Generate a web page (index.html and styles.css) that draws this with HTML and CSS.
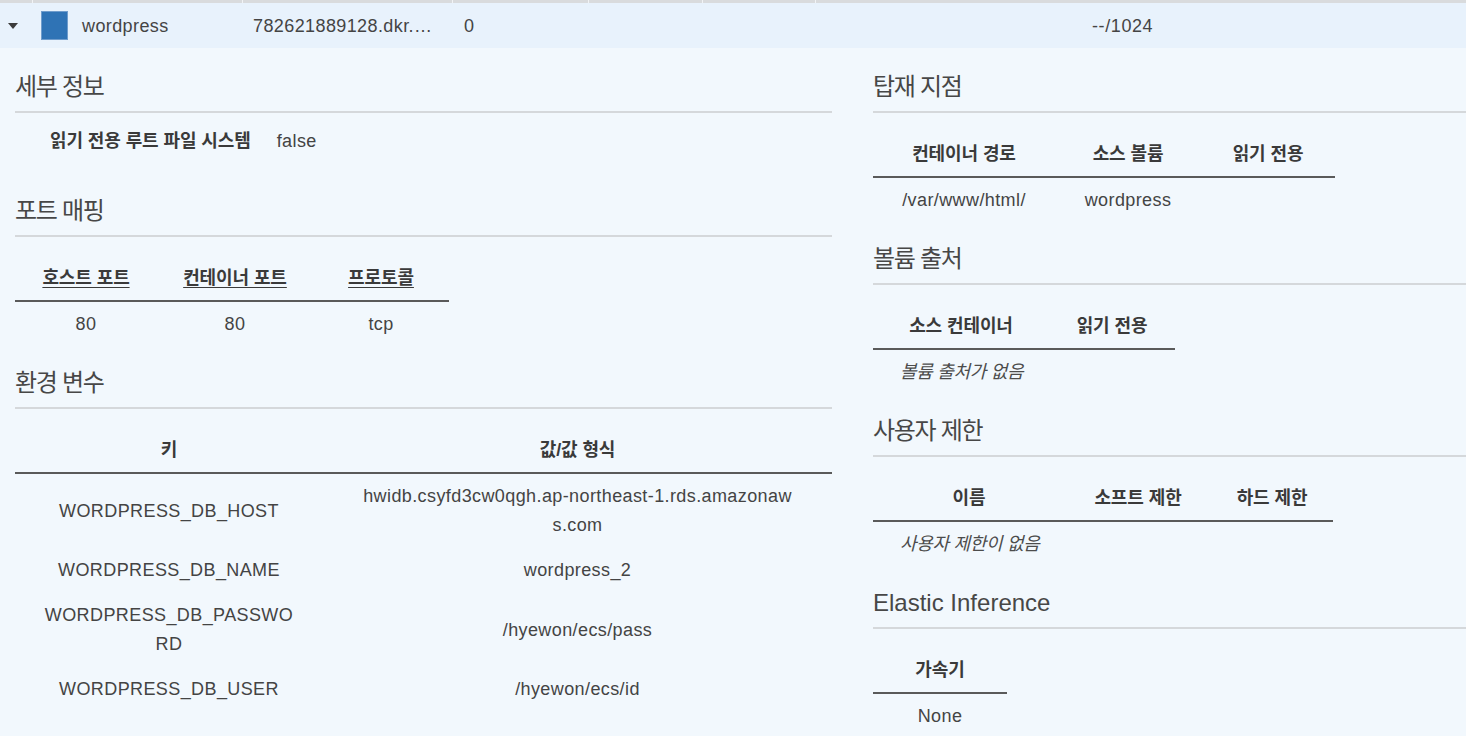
FILE: index.html
```html
<!DOCTYPE html>
<html lang="ko">
<head>
<meta charset="utf-8">
<title>Container details</title>
<link rel="stylesheet" href="styles.css">
</head>
<body>
<div class="strip">
  <span class="tick t1"></span><span class="tick t2"></span><span class="tick t3"></span><span class="tick t4"></span><span class="tick t5"></span><span class="tick t6"></span><span class="tick t7"></span>
</div>
<div class="toprow">
  <div class="c c1"><span class="caret"></span></div>
  <div class="c c2"><span class="swatch"></span><span class="name">wordpress</span></div>
  <div class="c c3"><span class="ellip">782621889128.dkr.ecr.ap-northeast-1.amazonaws.com</span></div>
  <div class="c c4">0</div>
  <div class="c c5"></div>
  <div class="c c6"></div>
  <div class="c c7"></div>
  <div class="c c8">--/1024</div>
</div>

<div class="content">
  <div class="col">
    <section class="section">
      <h3 class="sec-title ko">세부 정보</h3>
      <div class="detail">
        <span class="dlabel ko">읽기 전용 루트 파일 시스템</span>
        <span class="dval">false</span>
      </div>
    </section>

    <section class="section">
      <h3 class="sec-title ko">포트 매핑</h3>
      <table class="tbl">
        <colgroup><col class="w142"><col class="w156"><col class="w136"></colgroup>
        <thead><tr><th class="ko ul">호스트 포트</th><th class="ko ul">컨테이너 포트</th><th class="ko ul">프로토콜</th></tr></thead>
        <tbody><tr><td>80</td><td>80</td><td>tcp</td></tr></tbody>
      </table>
    </section>

    <section class="section">
      <h3 class="sec-title ko">환경 변수</h3>
      <table class="tbl env">
        <colgroup><col class="w308"><col class="w509"></colgroup>
        <thead><tr><th class="ko">키</th><th class="ko">값/값 형식</th></tr></thead>
        <tbody>
          <tr><td class="key">WORDPRESS_DB_HOST</td><td class="val">hwidb.csyfd3cw0qgh.ap-northeast-1.rds.amazonaws.com</td></tr>
          <tr><td class="key">WORDPRESS_DB_NAME</td><td class="val">wordpress_2</td></tr>
          <tr><td class="key">WORDPRESS_DB_PASSWORD</td><td class="val">/hyewon/ecs/pass</td></tr>
          <tr><td class="key">WORDPRESS_DB_USER</td><td class="val">/hyewon/ecs/id</td></tr>
        </tbody>
      </table>
    </section>
  </div>

  <div class="col">
    <section class="section">
      <h3 class="sec-title ko">탑재 지점</h3>
      <table class="tbl">
        <colgroup><col class="w182"><col class="w146"><col class="w134"></colgroup>
        <thead><tr><th class="ko">컨테이너 경로</th><th class="ko">소스 볼륨</th><th class="ko">읽기 전용</th></tr></thead>
        <tbody><tr><td>/var/www/html/</td><td>wordpress</td><td></td></tr></tbody>
      </table>
    </section>

    <section class="section">
      <h3 class="sec-title ko">볼륨 출처</h3>
      <table class="tbl">
        <colgroup><col class="w176"><col class="w126"></colgroup>
        <thead><tr><th class="ko">소스 컨테이너</th><th class="ko">읽기 전용</th></tr></thead>
        <tbody><tr><td class="empty ko" colspan="2">볼륨 출처가 없음</td></tr></tbody>
      </table>
    </section>

    <section class="section">
      <h3 class="sec-title ko">사용자 제한</h3>
      <table class="tbl">
        <colgroup><col class="w192"><col class="w146"><col class="w122"></colgroup>
        <thead><tr><th class="ko">이름</th><th class="ko">소프트 제한</th><th class="ko">하드 제한</th></tr></thead>
        <tbody><tr><td class="empty ko" colspan="3">사용자 제한이 없음</td></tr></tbody>
      </table>
    </section>

    <section class="section">
      <h3 class="sec-title">Elastic Inference</h3>
      <table class="tbl">
        <colgroup><col class="w134"></colgroup>
        <thead><tr><th class="ko">가속기</th></tr></thead>
        <tbody><tr><td>None</td></tr></tbody>
      </table>
    </section>
  </div>
</div>
</body>
</html>
```

FILE: styles.css
```css
* { box-sizing: border-box; }

html, body {
  margin: 0;
  padding: 0;
  background: #f2f8fd;
}

body {
  font-family: "Liberation Sans", Arial, "Noto Sans CJK KR", sans-serif;
  font-size: 18px;
  color: #444;
  letter-spacing: 0.4px;
  width: 1466px;
  overflow: hidden;
}

/* top strip (bottom of table header above) */
.strip {
  height: 3px;
  background: #d9dbdd;
  display: flex;
}
.tick {
  display: block;
  height: 3px;
  border-right: 1px solid #f1f3f5;
}
.t1 { width: 33px; }
.t2 { width: 210px; }
.t3 { width: 210px; }
.t4 { width: 136px; }
.t5 { width: 114px; }
.t6 { width: 113px; }
.t7 { width: 0; border-right: none; }

/* expanded row */
.toprow {
  display: grid;
  grid-template-columns: 32px 210px 210px 136px 114px 113px 265px 1fr;
  height: 45px;
  background: #e8f2fc;
  align-items: center;
}
.c {
  padding-left: 11px;
  white-space: nowrap;
  display: flex;
  align-items: center;
  line-height: 22px;
  min-width: 0;
  overflow: hidden;
}
.c1 { padding-left: 8px; }
.c2 { padding-left: 9px; }
.c4 { padding-left: 12px; }
.c8 { padding-left: 12px; letter-spacing: 0.6px; }

.caret {
  display: block;
  width: 0;
  height: 0;
  border-left: 5px solid transparent;
  border-right: 5px solid transparent;
  border-top: 6px solid #3b3b3b;
  margin-top: 1px;
}
.swatch {
  display: block;
  flex: none;
  width: 27px;
  height: 29px;
  background: #2f73b5;
  border: 1px solid #6f9ccc;
  margin-right: 14px;
}
.ellip {
  display: block;
  width: 183px;
  overflow: hidden;
  text-overflow: ellipsis;
  white-space: nowrap;
}

/* main two-column layout */
.content {
  display: grid;
  grid-template-columns: 817px 1fr;
  column-gap: 41px;
  padding-left: 15px;
  margin-top: 24px;
}

.section + .section { margin-top: 21px; }

.sec-title {
  margin: 0;
  font-size: 24px;
  font-weight: normal;
  line-height: 30px;
  padding-bottom: 9px;
  border-bottom: 2px solid #d5d8db;
  color: #474747;
  letter-spacing: 0;
}
.sec-title.ko { letter-spacing: -1.3px; }

.detail {
  display: flex;
  gap: 26px;
  padding: 14px 0 19px 35px;
  line-height: 29px;
}
.dlabel {
  font-weight: bold;
  color: #3a3a3a;
}
.ko { letter-spacing: -0.1px; }

/* tables */
.tbl {
  border-collapse: collapse;
  table-layout: fixed;
  margin-top: 20px;
}
.tbl th {
  font-weight: bold;
  font-size: 18px;
  line-height: 29px;
  padding: 7px 4px;
  text-align: center;
  color: #3a3a3a;
  border-bottom: 2px solid #5a5a5a;
}
.tbl th.ul { text-decoration: underline; text-underline-offset: 3px; }
.tbl td {
  line-height: 29px;
  padding: 8px 4px;
  text-align: center;
  vertical-align: middle;
}
.tbl td.empty {
  text-align: left;
  font-style: italic;
  padding-left: 27px;
  color: #4c4c4c;
  letter-spacing: -0.3px;
}

.env td.key {
  padding: 8px 26px;
  word-break: break-all;
}
.env td.val {
  padding: 8px 38px;
  word-break: break-all;
}

.w122 { width: 122px; }
.w126 { width: 126px; }
.w134 { width: 134px; }
.w136 { width: 136px; }
.w142 { width: 142px; }
.w146 { width: 146px; }
.w156 { width: 156px; }
.w176 { width: 176px; }
.w182 { width: 182px; }
.w192 { width: 192px; }
.w308 { width: 308px; }
.w509 { width: 509px; }
```
